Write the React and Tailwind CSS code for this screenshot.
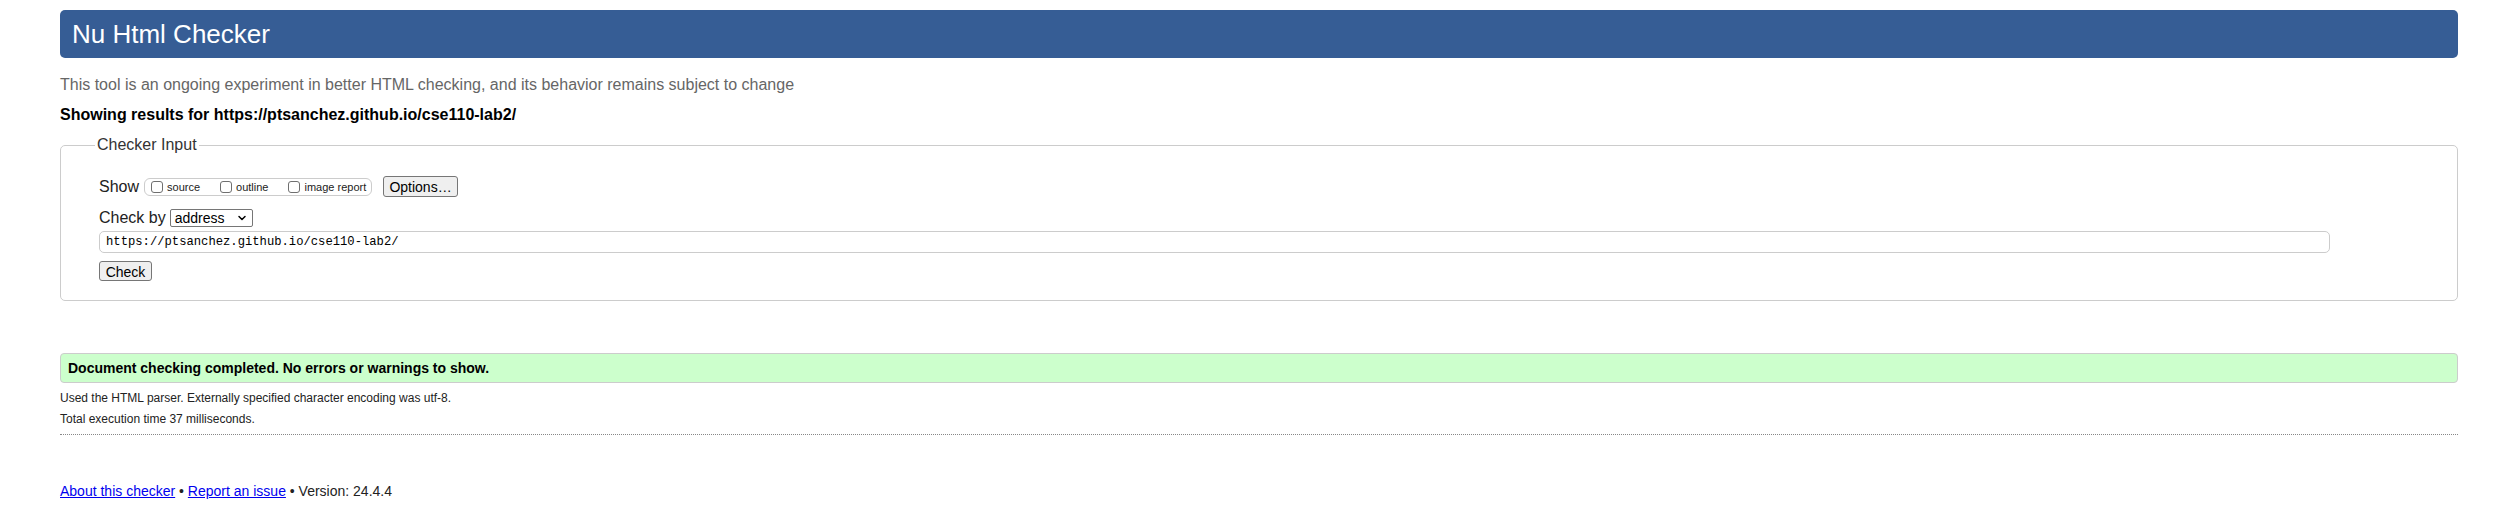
import { ChevronDown } from "lucide-react";

const Checkbox = ({ label }) => (
  <label className="flex items-center gap-[4px] text-[11px] text-[#222]">
    <span className="w-[12px] h-[12px] rounded-[3px] border border-[#6f6f6f] bg-white" />
    <span className="mt-[2px]">{label}</span>
  </label>
);

const App = () => {
  return (
    <div className="min-h-screen bg-white pl-[60px] pt-[10px] font-['Liberation_Sans',Arial,sans-serif] text-[#222]">
      {/**header */}
      <header className="mr-[49px] h-[48px] rounded-[5px] bg-[#365d95] flex items-center pl-[12px]">
        <h1 className="text-[26px] text-white font-normal">Nu Html Checker</h1>
      </header>

      <p className="mt-[18px] text-[16px] leading-[18px] text-[#666]">
        This tool is an ongoing experiment in better HTML checking, and its behavior remains subject to change
      </p>
      <p className="mt-[12px] text-[16px] leading-[18px] font-bold text-black">
        Showing results for https://ptsanchez.github.io/cse110-lab2/
      </p>

      {/**checker input */}
      <fieldset className="mt-[12px] mr-[49px] border border-[#cccccc] rounded-[5px] pl-[38px] pb-[16px]">
        <legend className="-ml-[4px] px-[2px] text-[16px] leading-[18px] text-[#333]">Checker Input</legend>

        <div className="mt-[22px] flex items-center h-[21px]">
          <span className="text-[16px] mr-[5px]">Show</span>
          <div className="h-[18px] w-[228px] rounded-[6px] border border-[#cccccc] flex items-center pl-[6px] gap-[20px]">
            <Checkbox label="source" />
            <Checkbox label="outline" />
            <Checkbox label="image report" />
          </div>
          <button className="ml-[11px] h-[21px] w-[75px] bg-[#efefef] border border-[#767676] rounded-[3px] text-[14px] text-black">
            Options…
          </button>
        </div>

        <div className="mt-[12px] flex items-center h-[18px]">
          <span className="text-[16px] mr-[4px]">Check by</span>
          <div className="h-[18px] w-[83px] border border-[#767676] rounded-[2px] flex items-center justify-between pl-[4px] pr-[4px] text-[14px] text-black">
            address
            <ChevronDown className="w-[12px] h-[12px]" strokeWidth={3} />
          </div>
        </div>

        <div className="mt-[4px] mr-[127px] h-[22px] rounded-[5px] border border-[#cccccc] flex items-center pl-[6px] font-['Liberation_Mono',monospace] text-[12.2px] text-black">
          https://ptsanchez.github.io/cse110-lab2/
        </div>

        <button className="mt-[8px] h-[20px] w-[53px] bg-[#efefef] border border-[#767676] rounded-[3px] text-[14px] text-black">
          Check
        </button>
      </fieldset>

      {/**results */}
      <div className="mt-[52px] mr-[49px] h-[30px] rounded-[4px] border border-[#cccccc] bg-[#ccffcc] flex items-center pl-[7px]">
        <h2 className="text-[14px] font-bold text-black">Document checking completed. No errors or warnings to show.</h2>
      </div>
      <p className="mt-[7px] text-[12px] leading-[16px]">Used the HTML parser. Externally specified character encoding was utf-8.</p>
      <p className="mt-[5px] text-[12px] leading-[16px]">Total execution time 37 milliseconds.</p>
      <hr className="mt-[7px] mr-[49px] border-0 border-t border-dotted border-[#888]" />

      {/**footer */}
      <p className="mt-[48px] text-[14px] leading-[16px]">
        <a href="#" className="text-[#0000ee] underline">About this checker</a>
        {" • "}
        <a href="#" className="text-[#0000ee] underline">Report an issue</a>
        {" • Version: 24.4.4"}
      </p>
    </div>
  );
};

export default App;
